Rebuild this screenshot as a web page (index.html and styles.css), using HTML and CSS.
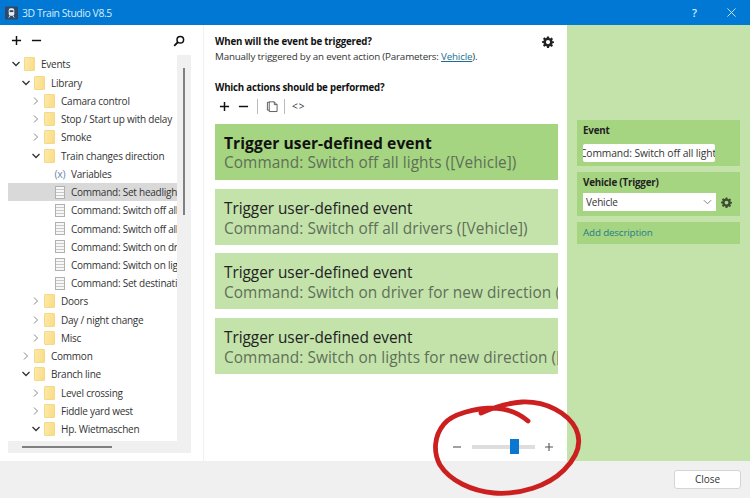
FILE: index.html
```html
<!DOCTYPE html>
<html lang="en">
<head>
<meta charset="utf-8">
<title>3D Train Studio V8.5</title>
<link rel="stylesheet" href="styles.css">
</head>
<body>
<div class="window">
  <header class="titlebar">
    <svg class="app-icon" viewBox="0 0 14 14"><rect width="14" height="14" rx="1" fill="#2f4a68"/><rect x="4" y="2" width="6" height="8" rx="2" fill="#e8edf2"/><rect x="5" y="4" width="4" height="2" fill="#2f4a68"/><path d="M4 12l1.500-2M10 12L8.500 10" stroke="#e8edf2"/></svg>
    <span class="title">3D Train Studio V8.5</span>
    <span class="help">?</span>
    <svg class="close-x" viewBox="0 0 10 10"><path d="M.5.500l9 9M9.500.500l-9 9" stroke="#d5ecfb" fill="none"/></svg>
  </header>
  <main class="body">
    <aside class="left">
      <div class="tree-tools">
        <svg class="tool" viewBox="0 0 12 12"><path d="M6 1v10M1 6h10" stroke="#111" stroke-width="1.600"/></svg>
        <svg class="tool" viewBox="0 0 12 12"><path d="M1 6h10" stroke="#111" stroke-width="1.600"/></svg>
        <svg class="search" viewBox="0 0 12 12"><circle cx="7.300" cy="4.700" r="3.300" fill="none" stroke="#111" stroke-width="1.500"/><path d="M5 7L1.200 10.800" stroke="#111" stroke-width="1.800"/></svg>
      </div>
      <div class="tree-frame">
        <div class="tree-row-area">
          <ul class="tree">
            <li class="l0"><svg class="chev" viewBox="0 0 10 10"><path d="M1.500 3L5 6.500 8.500 3" class="open"/></svg><i class="folder"></i>Events</li>
            <li class="l1"><svg class="chev" viewBox="0 0 10 10"><path d="M1.500 3L5 6.500 8.500 3" class="open"/></svg><i class="folder"></i>Library</li>
            <li class="l2"><svg class="chev" viewBox="0 0 10 10"><path d="M3 1.500L6.500 5 3 8.500"/></svg><i class="folder"></i>Camara control</li>
            <li class="l2"><svg class="chev" viewBox="0 0 10 10"><path d="M3 1.500L6.500 5 3 8.500"/></svg><i class="folder"></i>Stop / Start up with delay</li>
            <li class="l2"><svg class="chev" viewBox="0 0 10 10"><path d="M3 1.500L6.500 5 3 8.500"/></svg><i class="folder"></i>Smoke</li>
            <li class="l2"><svg class="chev" viewBox="0 0 10 10"><path d="M1.500 3L5 6.500 8.500 3" class="open"/></svg><i class="folder"></i>Train changes direction</li>
            <li class="l3"><span class="var">(x)</span>Variables</li>
            <li class="l3 selected"><i class="doc"></i>Command: Set headlights</li>
            <li class="l3"><i class="doc"></i>Command: Switch off all lights</li>
            <li class="l3"><i class="doc"></i>Command: Switch off all drivers</li>
            <li class="l3"><i class="doc"></i>Command: Switch on driver</li>
            <li class="l3"><i class="doc"></i>Command: Switch on lights</li>
            <li class="l3"><i class="doc"></i>Command: Set destination</li>
            <li class="l2"><svg class="chev" viewBox="0 0 10 10"><path d="M3 1.500L6.500 5 3 8.500"/></svg><i class="folder"></i>Doors</li>
            <li class="l2"><svg class="chev" viewBox="0 0 10 10"><path d="M3 1.500L6.500 5 3 8.500"/></svg><i class="folder"></i>Day / night change</li>
            <li class="l2"><svg class="chev" viewBox="0 0 10 10"><path d="M3 1.500L6.500 5 3 8.500"/></svg><i class="folder"></i>Misc</li>
            <li class="l1"><svg class="chev" viewBox="0 0 10 10"><path d="M3 1.500L6.500 5 3 8.500"/></svg><i class="folder"></i>Common</li>
            <li class="l1"><svg class="chev" viewBox="0 0 10 10"><path d="M1.500 3L5 6.500 8.500 3" class="open"/></svg><i class="folder"></i>Branch line</li>
            <li class="l2"><svg class="chev" viewBox="0 0 10 10"><path d="M3 1.500L6.500 5 3 8.500"/></svg><i class="folder"></i>Level crossing</li>
            <li class="l2"><svg class="chev" viewBox="0 0 10 10"><path d="M3 1.500L6.500 5 3 8.500"/></svg><i class="folder"></i>Fiddle yard west</li>
            <li class="l2"><svg class="chev" viewBox="0 0 10 10"><path d="M1.500 3L5 6.500 8.500 3" class="open"/></svg><i class="folder"></i>Hp. Wietmaschen</li>
          </ul>
          <div class="vscroll"><div class="vthumb"></div></div>
        </div>
        <div class="hscroll"><div class="hthumb"></div></div>
      </div>
    </aside>
    <section class="center">
      <div class="q-head">
        <h2>When will the event be triggered?</h2>
        <svg class="gear" viewBox="0 0 24 24"><use href="#gear-shape"/></svg>
      </div>
      <p class="desc">Manually triggered by an event action (Parameters: <a href="#">Vehicle</a>).</p>
      <h2 class="q2">Which actions should be performed?</h2>
      <div class="action-tools">
        <svg class="tool" viewBox="0 0 12 12"><path d="M6 1v10M1 6h10" stroke="#111" stroke-width="1.600"/></svg>
        <svg class="tool" viewBox="0 0 12 12"><path d="M1 6h10" stroke="#111" stroke-width="1.600"/></svg>
        <span class="sep"></span>
        <svg class="copy" viewBox="0 0 13 14"><path d="M3.500 2.500V13h8.500V5.500L9 2.500zM9 2.500v3h3M3.500 3H1.500v8.500h2" fill="none" stroke="#555"/></svg>
        <span class="sep"></span>
        <span class="code">&lt;&gt;</span>
      </div>
      <div class="cards">
        <div class="card active"><strong>Trigger user-defined event</strong><span>Command: Switch off all lights ([Vehicle])</span></div>
        <div class="card"><strong>Trigger user-defined event</strong><span>Command: Switch off all drivers ([Vehicle])</span></div>
        <div class="card"><strong>Trigger user-defined event</strong><span>Command: Switch on driver for new direction ([Vehicle])</span></div>
        <div class="card"><strong>Trigger user-defined event</strong><span>Command: Switch on lights for new direction ([Vehicle])</span></div>
      </div>
      <div class="zoom">
        <svg class="zoom-sign" viewBox="0 0 10 10"><path d="M1 5h8" stroke="#555" stroke-width="1.100"/></svg>
        <div class="slider"><div class="knob"></div></div>
        <svg class="zoom-sign" viewBox="0 0 10 10"><path d="M5 1v8M1 5h8" stroke="#555" stroke-width="1.100"/></svg>
      </div>
    </section>
    <aside class="right">
      <div class="prop prop-event">
        <label>Event</label>
        <div class="input"><span>Command: Switch off all lights</span></div>
      </div>
      <div class="prop prop-vehicle">
        <label>Vehicle (Trigger)</label>
        <div class="select-row">
          <div class="select">Vehicle<svg class="select-chev" viewBox="0 0 10 6"><path d="M1 1l4 4 4-4" fill="none" stroke="#777"/></svg></div>
          <svg class="gear small" viewBox="0 0 24 24"><use href="#gear-shape"/></svg>
        </div>
      </div>
      <div class="prop prop-add"><a href="#">Add description</a></div>
    </aside>
  </main>
  <footer class="bottom"><button class="close-btn" type="button">Close</button></footer>
  <svg class="ring" viewBox="0 0 750 498"><path d="M528 421C520 414 510 409 495 408C475 408 452 414 444 424C434 436 433 452 440 465C450 481 472 491 494 493C520 495 548 486 564 470C578 456 582 442 576 429C568 413 546 401 522 402C508 403 495 407 481 413"/></svg>
  <svg class="defs" width="0" height="0"><defs><path id="gear-shape" fill-rule="evenodd" d="M10 1h4l.6 3.200 1.900.8L19.200 3.200l2.800 2.800-1.800 2.700.8 1.900L24 11v3l-3 .6-.8 1.900 1.800 2.700-2.800 2.800-2.700-1.800-1.900.8L14 23.800h-4l-.6-3.200-1.900-.8-2.700 1.800L2 18.800l1.800-2.700-.8-1.900L0 13.600v-3l3-.6.800-1.900L2 5.400 4.800 2.600l2.700 1.800 1.900-.8zM12 8a4.200 4.200 0 1 0 0 8.400A4.200 4.200 0 0 0 12 8z"/></defs></svg>
</div>
</body>
</html>
```
FILE: styles.css
```css
* { box-sizing: border-box; }
html, body { margin: 0; padding: 0; }
body { width: 750px; height: 498px; overflow: hidden; background: #f0f0f0; font-family: "Open Sans", "Noto Sans", sans-serif; color: #222; }
.window { position: relative; width: 750px; height: 498px; display: flex; flex-direction: column; }
.titlebar { height: 25px; background: #0078d4; display: flex; align-items: center; padding: 0 0 0 5px; color: #d7eefc; flex: none; }
.app-icon { width: 13px; height: 14px; flex: none; }
.title { margin-left: 4px; font-size: 10.400px; letter-spacing: -.42px; }
.help { margin-left: auto; font-size: 11px; font-weight: 600; }
.close-x { width: 9px; height: 9px; margin: 0 14px 0 30px; }

.body { flex: 1; display: flex; min-height: 0; background: #fff; }
.left { width: 204px; flex: none; padding: 5px 12px 8px 8px; border-right: 1px solid #f0f0f0; display: flex; flex-direction: column; }
.tree-tools { height: 25px; display: flex; align-items: center; gap: 9px; padding: 0 2px 4px 3px; flex: none; }
.tool { width: 11px; height: 11px; flex: none; }
.search { width: 12px; height: 12px; margin-left: auto; margin-right: 4px; }
.tree-frame { flex: 1; margin-top: 0; min-height: 0; display: flex; flex-direction: column; }
.tree-row-area { flex: 1; display: flex; min-height: 0; }
.tree { list-style: none; margin: 0; padding: .3px 0 0; width: 169px; overflow: hidden; flex: none; }
.tree li { height: 18.240px; display: flex; align-items: center; font-size: 10px; letter-spacing: -.24px; white-space: nowrap; color: #333; }
.l0 { padding-left: 3px; }
.l1 { padding-left: 13px; }
.l2 { padding-left: 23px; }
.l3 { padding-left: 43px; }
.tree li.selected { background: #d9d9d9; }
.chev { width: 10px; height: 10px; flex: none; margin-right: 3px; }
.chev path { fill: none; stroke: #888; stroke-width: 1; }
.chev path.open { stroke: #333; stroke-width: 1.300; }
.folder { width: 11px; height: 14px; flex: none; margin-right: 6px; background: linear-gradient(100deg, #fde9a8, #f9dc85); border: 1px solid #f3d988; border-radius: 1px; }
.doc { width: 10px; height: 13px; flex: none; margin: 0 6px 0 4px; border: 1px solid #b0b0b0; background: repeating-linear-gradient(#f7f7f7 0 2px, #c8c8c8 2px 3px); }
.var { width: 18px; margin-right: 2px; color: #6b87b0; font-size: 10.500px; text-align: center; flex: none; }
.vscroll { width: 14px; background: #f0f0f0; flex: none; padding: 13px 0 0 6px; }
.vthumb { width: 2px; height: 147px; background: #808080; }
.hscroll { height: 12px; background: #f0f0f0; flex: none; padding: 5px 0 0 14px; }
.hthumb { width: 90px; height: 2px; background: #808080; }

.center { flex: none; width: 363px; position: relative; padding: 10px 0 0 11px; }
.q-head { display: flex; align-items: center; justify-content: space-between; padding-right: 13px; height: 14px; }
h2 { margin: 0; font-size: 9.700px; line-height: 14px; font-weight: 700; color: #111; letter-spacing: -.17px; }
.gear { width: 12px; height: 12px; fill: #222; flex: none; }
.desc { margin: 1px 0 0; font-size: 9.800px; line-height: 14px; letter-spacing: -.18px; color: #333; }
.desc a { color: #1a6f96; }
.q2 { margin-top: 17px; letter-spacing: -.2px; }
.action-tools { height: 18px; margin-top: 2px; display: flex; align-items: center; gap: 8px; padding-left: 4px; }
.sep { width: 1px; height: 15px; background: #bbb; }
.copy { width: 12px; height: 14px; margin: 0 -2px 0 0; }
.code { font-size: 10px; letter-spacing: 1px; color: #333; margin-left: -1px; }
.cards { margin-top: 9px; width: 343px; display: flex; flex-direction: column; gap: 8.500px; }
.card { height: 56px; background: #c3e3ab; padding: 10px 0 0 9px; overflow: hidden; white-space: nowrap; display: flex; flex-direction: column; }
.card strong { font-size: 15.400px; line-height: 20px; font-weight: 400; color: #222; letter-spacing: -.04px; }
.card span { font-size: 15.400px; line-height: 20px; color: #5f6f58; letter-spacing: .06px; }
.card.active { background: #a5d581; padding-top: 9px; }
.card.active strong { font-size: 15.600px; font-weight: 700; color: #111; letter-spacing: .08px; }
.zoom { position: absolute; left: 248px; bottom: 6px; width: 102px; height: 16px; display: flex; align-items: center; justify-content: space-between; }
.zoom-sign { width: 10px; height: 10px; flex: none; }
.slider { position: relative; width: 63px; height: 4px; background: #dedede; }
.knob { position: absolute; left: 38px; top: -6px; width: 9px; height: 15px; background: #0a78d0; }

.right { flex: 1; background: #c3e3ab; padding: 95px 10px 0; display: flex; flex-direction: column; gap: 6px; }
.prop { background: #a5d581; padding: 4px 6px; }
.prop label { display: block; font-size: 9.800px; line-height: 14px; font-weight: 700; color: #222; letter-spacing: -.2px; }
.prop-event { height: 46px; }
.prop-vehicle { height: 44px; }
.prop-add { height: 22px; padding: 4px 6px; font-size: 9.800px; line-height: 14px; letter-spacing: -.15px; }
.prop-add a { color: #2a7a8a; text-decoration: none; }
.input { margin: 6px 0 0 0; width: 132px; height: 18px; background: #fff; border-radius: 2px; overflow: hidden; white-space: nowrap; font-size: 10.300px; line-height: 18px; color: #333; letter-spacing: -.12px; }
.input span { display: block; margin-left: -3px; }
.select-row { display: flex; align-items: center; margin-top: 3px; gap: 5px; margin-left: 0; }
.select { width: 133px; height: 18px; background: #fff; font-size: 10px; line-height: 18px; padding: 0 3px; color: #333; display: flex; align-items: center; justify-content: space-between; letter-spacing: -.2px; }
.select-chev { width: 9px; height: 6px; margin-right: 1px; }
.gear.small { width: 11px; height: 11px; fill: #3c4d32; }

.bottom { height: 37px; flex: none; background: #f0f0f0; display: flex; align-items: center; justify-content: flex-end; padding: 0 9px 1px 0; }
.close-btn { width: 67px; height: 19px; padding: 0; background: #fff; border: 1px solid #d5d5d5; border-radius: 3px; font: 10px "Open Sans", sans-serif; color: #333; }

.ring { position: absolute; left: 0; top: 0; width: 750px; height: 498px; pointer-events: none; }
.ring path { fill: none; stroke: #cc1f1f; stroke-width: 4.800px; stroke-linecap: round; }
.defs { position: absolute; }
```
